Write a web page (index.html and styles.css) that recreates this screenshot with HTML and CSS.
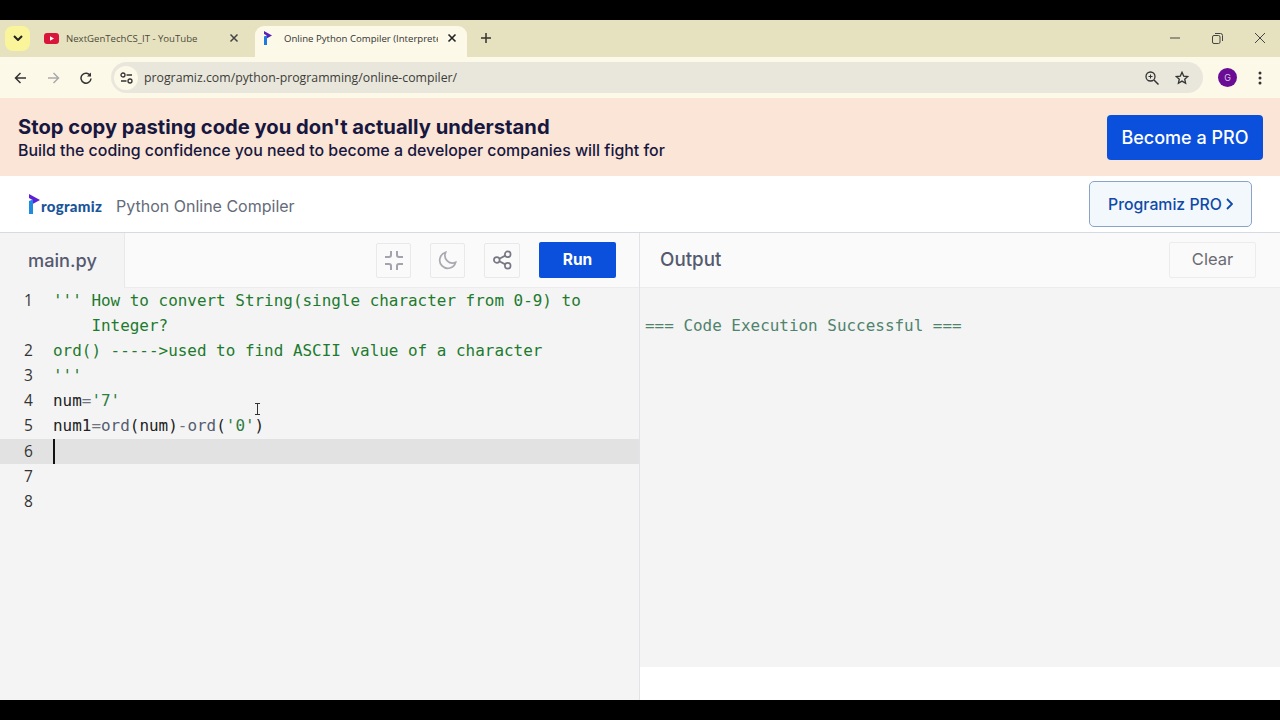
FILE: index.html
```html
<!DOCTYPE html>
<html lang="en">
<head>
  <meta charset="UTF-8" />
  <title>Online Python Compiler</title>
  <link rel="stylesheet" href="styles.css">
</head>
<body>
  <div class="black-bar"></div>

  <div class="tabstrip">
    <div class="tab-search">
      <svg width="10" height="6" viewBox="0 0 10 6"><path d="M1 1l4 4 4-4" fill="none" stroke="#222" stroke-width="2"/></svg>
    </div>
    <div class="tab">
      <svg class="favicon" width="15" height="11" viewBox="0 0 15 11"><rect width="15" height="11" rx="3" fill="#d9153a"/><path d="M6 3.200v4.600L10 5.500z" fill="#fff"/></svg>
      <span class="tab-title">NextGenTechCS_IT - YouTube</span>
      <svg class="tab-close" width="10" height="10" viewBox="0 0 10 10"><path d="M1.500 1.500l7 7M8.500 1.500l-7 7" stroke="#444" stroke-width="1.500"/></svg>
    </div>
    <div class="tab tab-active">
      <svg class="favicon" width="8" height="14" viewBox="0 0 8 14"><path d="M0 0l8 4.500L0 9V6L3 4.500 0 3z" fill="#5b21b6"/><path d="M0 5.500l3-1V14H0z" fill="#1f7ae0"/></svg>
      <span class="tab-title">Online Python Compiler (Interprete</span>
      <svg class="tab-close" width="10" height="10" viewBox="0 0 10 10"><path d="M1.500 1.500l7 7M8.500 1.500l-7 7" stroke="#222" stroke-width="1.600"/></svg>
    </div>
    <svg class="new-tab" width="12" height="12" viewBox="0 0 12 12"><path d="M6 1v10M1 6h10" stroke="#333" stroke-width="1.500"/></svg>
    <div class="win-controls">
      <svg width="10" height="10" viewBox="0 0 10 10"><path d="M0 5h10" stroke="#444"/></svg>
      <svg width="11" height="11" viewBox="0 0 11 11"><rect x=".5" y="2.500" width="7.500" height="8" rx="1.500" fill="none" stroke="#444"/><path d="M3 .5h5.500a2 2 0 0 1 2 2V8" fill="none" stroke="#444"/></svg>
      <svg width="10" height="10" viewBox="0 0 10 10"><path d="M0 0l10 10M10 0L0 10" stroke="#444"/></svg>
    </div>
  </div>

  <div class="toolbar">
    <svg class="nav-icon" width="13" height="12" viewBox="0 0 13 12"><path d="M12 6H2M6.500 1L1.500 6l5 5" fill="none" stroke="#333" stroke-width="1.500"/></svg>
    <svg class="nav-icon" width="13" height="12" viewBox="0 0 13 12"><path d="M1 6h10M6.500 1l5 5-5 5" fill="none" stroke="#aaa" stroke-width="1.500"/></svg>
    <svg class="nav-icon" width="12" height="12" viewBox="0 0 12 12"><path d="M10.500 4A5 5 0 1 0 11 6.500" fill="none" stroke="#333" stroke-width="1.500"/><path d="M11 .5v4H7z" fill="#333"/></svg>
    <div class="omnibox">
      <span class="site-info">
        <svg width="13" height="12" viewBox="0 0 13 12"><circle cx="3" cy="3" r="2" fill="none" stroke="#333" stroke-width="1.300"/><path d="M6.500 3H12M1 9h5.500" stroke="#333" stroke-width="1.300"/><circle cx="10" cy="9" r="2" fill="none" stroke="#333" stroke-width="1.300"/></svg>
      </span>
      <span class="url">programiz.com/python-programming/online-compiler/</span>
      <svg class="zoom-icon" width="14" height="14" viewBox="0 0 14 14"><circle cx="5.500" cy="5.500" r="4.500" fill="none" stroke="#333" stroke-width="1.300"/><path d="M9 9l4.500 4.500" stroke="#333" stroke-width="1.500"/><path d="M3.500 5.500h4M5.500 3.500v4" stroke="#333"/></svg>
      <svg class="star-icon" width="14" height="14" viewBox="0 0 14 14"><path d="M7 1.300l1.700 3.800 4.100.4-3.100 2.700.9 4-3.600-2.100-3.600 2.100.9-4L1.200 5.500l4.100-.4z" fill="none" stroke="#333" stroke-width="1.300"/></svg>
    </div>
    <div class="avatar">G</div>
    <svg class="menu-dots" width="4" height="14" viewBox="0 0 4 14"><circle cx="2" cy="2" r="1.500" fill="#333"/><circle cx="2" cy="7" r="1.500" fill="#333"/><circle cx="2" cy="12" r="1.500" fill="#333"/></svg>
  </div>

  <div class="promo">
    <div class="promo-text">
      <div class="promo-title">Stop copy pasting code you don't actually understand</div>
      <div class="promo-sub">Build the coding confidence you need to become a developer companies will fight for</div>
    </div>
    <div class="promo-btn">Become a PRO</div>
  </div>

  <header class="site-header">
    <div class="brand">
      <span class="logo">
        <svg width="13" height="20" viewBox="0 0 13 20"><path d="M1 0l11 6-11 6V8L4.500 6 1 4z" fill="#5b21d6"/><path d="M1 7l4-1.500V20H1z" fill="#1f8be0"/></svg>
        <span class="logo-text">rogramiz</span>
      </span>
      <span class="brand-title">Python Online Compiler</span>
    </div>
    <div class="pro-btn">Programiz PRO <svg width="7" height="12" viewBox="0 0 7 12"><path d="M1 1l5 5-5 5" fill="none" stroke="#0f4aa8" stroke-width="1.800"/></svg></div>
  </header>

  <main class="workspace">
    <section class="editor-pane">
      <div class="editor-bar">
        <div class="file-tab">main.py</div>
        <div class="editor-actions">
          <div class="icon-btn">
            <svg width="20" height="21" viewBox="0 0 20 21" fill="none" stroke="#a3a3ad" stroke-width="2"><path d="M7 1v4a2 2 0 0 1-2 2H1M13 1v4a2 2 0 0 0 2 2h4M7 20v-4a2 2 0 0 0-2-2H1M13 20v-4a2 2 0 0 1 2-2h4"/></svg>
          </div>
          <div class="icon-btn">
            <svg width="19" height="19" viewBox="0 0 20 20" fill="none" stroke="#a9a9b2" stroke-width="1.800"><path d="M8 1.500a8.500 8.500 0 1 0 10.500 10.500A8 8 0 0 1 8 1.500z"/></svg>
          </div>
          <div class="icon-btn icon-btn-wide">
            <svg width="19" height="20" viewBox="0 0 20 20" fill="none" stroke="#787884" stroke-width="1.800"><circle cx="15.500" cy="4" r="3"/><circle cx="4" cy="10" r="3"/><circle cx="15.500" cy="16" r="3"/><path d="M6.700 8.600l6.200-3.200M6.700 11.400l6.200 3.200"/></svg>
          </div>
          <div class="run-btn">Run</div>
        </div>
      </div>
      <div class="code">
        <div class="line"><span class="num">1</span><span class="src comment">''' How to convert String(single character from 0-9) to<br><span class="wrapped">Integer?</span></span></div>
        <div class="line"><span class="num">2</span><span class="src comment">ord() -----&gt;used to find ASCII value of a character</span></div>
        <div class="line"><span class="num">3</span><span class="src comment">'''</span></div>
        <div class="line"><span class="num">4</span><span class="src">num<span class="op">=</span><span class="str">'7'</span></span></div>
        <div class="line"><span class="num">5</span><span class="src">num1<span class="op">=</span><span class="fn">ord</span>(num)<span class="op">-</span><span class="fn">ord</span>(<span class="str">'0'</span>)</span></div>
        <div class="line line-active"><span class="num">6</span><span class="src"><span class="caret"></span></span></div>
        <div class="line"><span class="num">7</span><span class="src"></span></div>
        <div class="line"><span class="num">8</span><span class="src"></span></div>
        <svg class="ibeam" width="7" height="12" viewBox="0 0 7 12"><path d="M1 .5h5M1 11.500h5M3.500 .5v11" fill="none" stroke="#333"/></svg>
      </div>
    </section>
    <section class="output-pane">
      <div class="output-bar">
        <div class="output-title">Output</div>
        <div class="clear-btn">Clear</div>
      </div>
      <div class="output-body">=== Code Execution Successful ===</div>
      <div class="output-foot"></div>
    </section>
  </main>

  <div class="black-bar bottom"></div>
</body>
</html>
```

FILE: styles.css
```css
html, body {
  margin: 0;
  height: 720px;
  overflow: hidden;
}
body {
  display: flex;
  flex-direction: column;
  background: #000;
  font-family: Inter, 'Noto Sans', sans-serif;
  width: 1280px;
}
.black-bar {
  height: 20px;
  background: #000;
  flex: none;
}
.tabstrip {
  height: 37px;
  background: #e6e2bf;
  display: flex;
  align-items: center;
  flex: none;
}
.tab-search {
  width: 25px;
  height: 25px;
  margin-left: 5px;
  margin-bottom: 1px;
  background: #faf59a;
  border-radius: 8px;
  display: flex;
  align-items: center;
  justify-content: center;
}
.tab {
  width: 225px;
  height: 37px;
  display: flex;
  align-items: center;
  font-family: 'Open Sans', sans-serif;
  font-size: 9.600px;
  color: #4c4a3c;
  box-sizing: border-box;
  padding: 0 0 1px 14px;
  flex: none;
  white-space: nowrap;
}
.tab .favicon {
  flex: none;
  margin-right: 7px;
}
.tab-title {
  width: 156px;
  flex: none;
  overflow: hidden;
}
.tab .tab-close {
  flex: none;
  margin-left: 7px;
}
.tab-active {
  width: 212px;
  height: 31px;
  margin-top: 6px;
  background: #fdf9e8;
  border-radius: 9px 9px 0 0;
  color: #333;
  padding: 0 0 7px 9px;
}
.tab-active .favicon { margin-right: 12px; }
.tab-active .tab-title { width: 154px; }
.tab-active .tab-close { margin-left: 9px; }
.new-tab { margin-left: 13px; margin-bottom: 1px; }
.win-controls {
  margin-left: auto;
  display: flex;
  gap: 32px;
  margin-right: 15px;
  margin-bottom: 1px;
}
.toolbar {
  height: 41px;
  background: #fdf9e8;
  display: flex;
  align-items: center;
  flex: none;
  padding-left: 14px;
}
.nav-icon { margin-right: 20px; flex: none; }
.omnibox {
  width: 1092px;
  height: 31px;
  margin-left: -1px;
  background: #e9e7dc;
  border-radius: 16px;
  display: flex;
  align-items: center;
  flex: none;
  box-sizing: border-box;
}
.site-info {
  width: 24px;
  height: 24px;
  margin-left: 3px;
  border-radius: 50%;
  background: #fdf9e8;
  display: flex;
  align-items: center;
  justify-content: center;
}
.url {
  margin-left: 6px;
  font-family: 'Open Sans', sans-serif;
  font-size: 12.300px;
  color: #3d3d38;
}
.zoom-icon { margin-left: auto; }
.star-icon { margin-left: 16px; margin-right: 14px; }
.avatar {
  width: 19px;
  height: 19px;
  margin-left: 15px;
  border-radius: 50%;
  background: #6a0d94;
  color: #d9c9e6;
  font-size: 9px;
  display: flex;
  align-items: center;
  justify-content: center;
  flex: none;
}
.menu-dots { margin-left: 21px; flex: none; }

.promo {
  height: 78px;
  background: #fbe5d6;
  display: flex;
  align-items: center;
  justify-content: space-between;
  flex: none;
}
.promo-text { margin-left: 18px; padding-top: 3px; }
.promo-title {
  font-size: 20.200px;
  font-weight: 700;
  color: #17173f;
  line-height: 24px;
}
.promo-sub {
  font-size: 15.900px;
  font-weight: 500;
  color: #17173f;
  line-height: 24px;
}
.promo-btn {
  width: 156px;
  height: 45px;
  margin-right: 17px;
  background: #0b50dc;
  border-radius: 4px;
  color: #fff;
  font-size: 18px;
  font-weight: 500;
  display: flex;
  align-items: center;
  justify-content: center;
}

.site-header {
  height: 56px;
  background: #fff;
  border-bottom: 1px solid #d5dae3;
  display: flex;
  align-items: center;
  justify-content: space-between;
  flex: none;
}
.brand {
  display: flex;
  align-items: center;
  margin-left: 28px;
}
.logo {
  display: flex;
  align-items: flex-end;
  width: 88px;
}
.logo-text {
  font-family: Lato, sans-serif;
  font-size: 15px;
  font-weight: 900;
  color: #1b5499;
  letter-spacing: 0.3px;
  line-height: 15px;
}
.brand-title {
  font-size: 16px;
  color: #656b7a;
  padding-top: 3px;
}
.pro-btn {
  width: 163px;
  height: 46px;
  margin-right: 28px;
  box-sizing: border-box;
  border: 1px solid #8aa3c9;
  border-radius: 5px;
  background: #f3f8fd;
  color: #0f4aa8;
  font-size: 15.800px;
  font-weight: 500;
  display: flex;
  align-items: center;
  justify-content: center;
  gap: 4px;
}

.workspace {
  flex: 1;
  display: flex;
  min-height: 0;
}
.editor-pane {
  width: 640px;
  box-sizing: border-box;
  border-right: 1px solid #e2e3e7;
  background: #f4f4f4;
  flex: none;
  display: flex;
  flex-direction: column;
}
.editor-bar {
  height: 55px;
  background: #fafafa;
  display: flex;
  flex: none;
}
.file-tab {
  width: 125px;
  box-sizing: border-box;
  background: #f4f4f4;
  border-right: 1px solid #e8e8ea;
  padding-left: 28px;
  line-height: 54px;
  font-size: 18.200px;
  font-weight: 500;
  color: #555a70;
}
.editor-actions {
  flex: 1;
  display: flex;
  align-items: center;
  justify-content: flex-end;
  padding-right: 23px;
  gap: 19px;
  border-bottom: 1px solid #ececec;
  height: 54px;
}
.icon-btn {
  width: 35px;
  height: 35px;
  box-sizing: border-box;
  border: 1px solid #e9e9ec;
  border-radius: 2px;
  display: flex;
  align-items: center;
  justify-content: center;
}
.icon-btn-wide { width: 36px; }
.run-btn {
  width: 77px;
  height: 36px;
  padding-bottom: 2px;
  box-sizing: border-box;
  background: #0b50dc;
  border-radius: 2px;
  color: #fff;
  font-size: 15.500px;
  font-weight: 700;
  display: flex;
  align-items: center;
  justify-content: center;
}
.code {
  font-family: 'DejaVu Sans Mono', monospace;
  font-size: 15.940px;
  line-height: 25.100px;
  color: #222;
  position: relative;
}
.line {
  display: flex;
}
.line-active { background: #e2e2e2; }
.num {
  width: 53px;
  flex: none;
  box-sizing: border-box;
  padding-left: 24px;
  font-family: 'Open Sans', sans-serif;
  font-size: 15.500px;
  color: #333;
}
.src {
  white-space: pre;
  display: block;
  min-height: 25px;
}
.comment { color: #1d7a2e; }
.wrapped { margin-left: 38.400px; }
.op { color: #6f7480; }
.fn { color: #555c70; }
.str { color: #2e7d43; }
.caret {
  display: block;
  width: 2px;
  height: 25px;
  background: #111;
}
.ibeam {
  position: absolute;
  left: 254px;
  top: 115px;
}
.output-pane {
  flex: 1;
  background: #f4f4f4;
  display: flex;
  flex-direction: column;
}
.output-bar {
  height: 54px;
  background: #fafafa;
  border-bottom: 1px solid #ececec;
  display: flex;
  align-items: center;
  justify-content: space-between;
  flex: none;
}
.output-title {
  margin-left: 20px;
  padding-bottom: 2px;
  font-size: 18.800px;
  font-weight: 500;
  color: #555a70;
}
.clear-btn {
  width: 87px;
  height: 36px;
  margin-right: 24px;
  padding-bottom: 2px;
  box-sizing: border-box;
  border: 1px solid #ececec;
  border-radius: 2px;
  color: #6a6a72;
  font-size: 16.500px;
  display: flex;
  align-items: center;
  justify-content: center;
}
.output-body {
  flex: 1;
  padding: 25px 0 0 5px;
  font-family: 'DejaVu Sans Mono', monospace;
  font-size: 15.940px;
  line-height: 25px;
  color: #4f836c;
}
.output-foot {
  height: 33px;
  background: #fff;
  flex: none;
}
.bottom { height: 20px; }
```
